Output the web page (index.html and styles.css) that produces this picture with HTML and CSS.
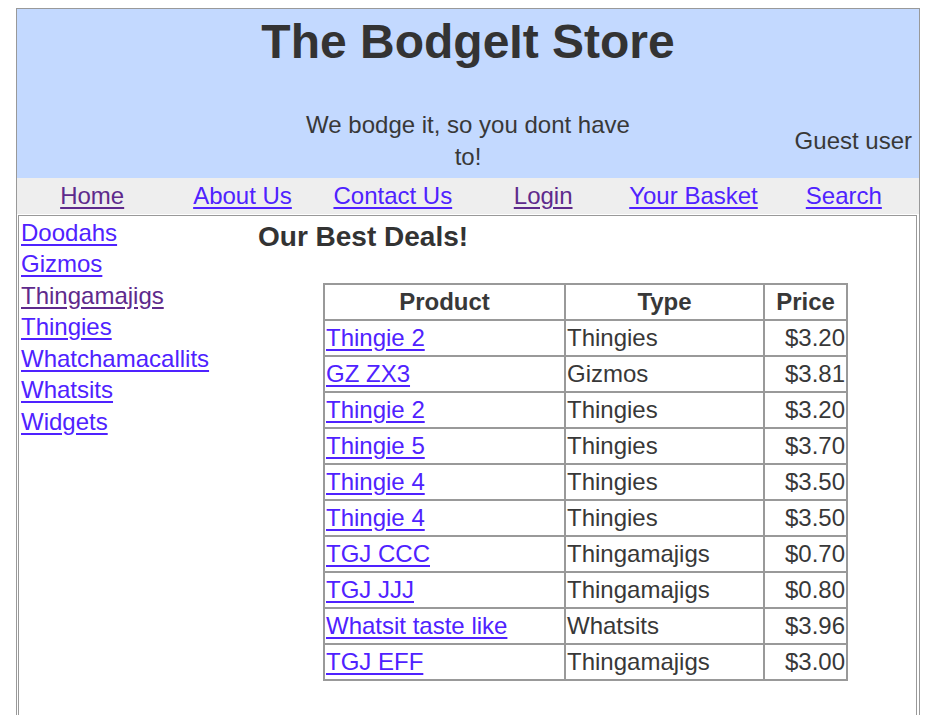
FILE: index.html
```html
<!DOCTYPE html>
<html lang="en">
<head>
<meta charset="utf-8">
<title>The BodgeIt Store</title>
<link rel="stylesheet" href="styles.css">
</head>
<body>
<div class="page">
  <header class="banner">
    <h1 class="title">The BodgeIt Store</h1>
    <div class="tagrow">
      <div class="spacer"></div>
      <div class="tagline">We bodge it, so you dont have to!</div>
      <div class="user">Guest user</div>
    </div>
  </header>
  <nav class="nav">
    <a class="visited" href="#">Home</a>
    <a href="#">About Us</a>
    <a href="#">Contact Us</a>
    <a class="visited" href="#">Login</a>
    <a href="#">Your Basket</a>
    <a href="#">Search</a>
  </nav>
  <div class="content">
    <aside class="cats">
      <a href="#">Doodahs</a>
      <a href="#">Gizmos</a>
      <a class="visited" href="#">Thingamajigs</a>
      <a href="#">Thingies</a>
      <a href="#">Whatchamacallits</a>
      <a href="#">Whatsits</a>
      <a href="#">Widgets</a>
    </aside>
    <main class="deals">
      <h3 class="deals-title">Our Best Deals!</h3>
      <table class="products">
        <colgroup>
          <col class="col-product">
          <col class="col-type">
          <col class="col-price">
        </colgroup>
        <thead>
          <tr><th>Product</th><th>Type</th><th>Price</th></tr>
        </thead>
        <tbody>
          <tr><td><a href="#">Thingie 2</a></td><td>Thingies</td><td class="price">$3.20</td></tr>
          <tr><td><a href="#">GZ ZX3</a></td><td>Gizmos</td><td class="price">$3.81</td></tr>
          <tr><td><a href="#">Thingie 2</a></td><td>Thingies</td><td class="price">$3.20</td></tr>
          <tr><td><a href="#">Thingie 5</a></td><td>Thingies</td><td class="price">$3.70</td></tr>
          <tr><td><a href="#">Thingie 4</a></td><td>Thingies</td><td class="price">$3.50</td></tr>
          <tr><td><a href="#">Thingie 4</a></td><td>Thingies</td><td class="price">$3.50</td></tr>
          <tr><td><a href="#">TGJ CCC</a></td><td>Thingamajigs</td><td class="price">$0.70</td></tr>
          <tr><td><a href="#">TGJ JJJ</a></td><td>Thingamajigs</td><td class="price">$0.80</td></tr>
          <tr><td><a href="#">Whatsit taste like</a></td><td>Whatsits</td><td class="price">$3.96</td></tr>
          <tr><td><a href="#">TGJ EFF</a></td><td>Thingamajigs</td><td class="price">$3.00</td></tr>
        </tbody>
      </table>
    </main>
  </div>
</div>
</body>
</html>
```

FILE: styles.css
```css
html, body {
  margin: 0;
  padding: 0;
  background: #ffffff;
}

body {
  font-family: "Liberation Sans", Arial, sans-serif;
  font-size: 24px;
  line-height: 31.5px;
  color: #383838;
}

a {
  color: #4f22ff;
  text-decoration: underline;
  text-underline-offset: 3px;
}

a.visited {
  color: #5e2a8c;
}

.page {
  width: 902px;
  margin: 8px 0 0 16px;
  border: 1px solid #999999;
  border-bottom: none;
}

/* Banner */
.banner {
  background: #c3d9ff;
  padding: 1px 0 6px;
}

.title {
  margin: 0 0 36px;
  font-size: 48px;
  line-height: 63px;
  font-weight: bold;
  text-align: center;
  color: #333333;
}

.tagrow {
  display: grid;
  grid-template-columns: 1fr 342px 1fr;
  align-items: center;
  padding: 0 7px;
}

.tagline {
  text-align: center;
}

.user {
  text-align: right;
}

/* Navigation */
.nav {
  display: grid;
  grid-template-columns: repeat(6, 1fr);
  background: #eeeeee;
  padding: 2px 0 2px;
  text-align: center;
}

.nav a {
  justify-self: center;
}

/* Content */
.content {
  display: grid;
  grid-template-columns: 237px 1fr;
  margin: 1px 2px 0 1px;
  border: 1px solid #999999;
  border-bottom: none;
  padding: 1px 3px 60px 2px;
}

.cats {
  display: flex;
  flex-direction: column;
  align-items: flex-start;
}

.deals {
  padding-top: 1px;
}

.deals-title {
  margin: 0 0 28px;
  font-size: 28px;
  line-height: 37px;
  font-weight: bold;
  color: #333333;
}

.products {
  width: 525px;
  margin: 0 auto;
  border: 1px solid #999999;
  border-spacing: 0;
  table-layout: fixed;
}

.col-product { width: 241px; }
.col-type { width: 199px; }
.col-price { width: 83px; }

.products th,
.products td {
  border: 1px solid #999999;
  padding: 1px;
  line-height: 32px;
  text-align: left;
  white-space: nowrap;
}

.products th {
  text-align: center;
  font-weight: bold;
}

.products td.price {
  text-align: right;
}
```
